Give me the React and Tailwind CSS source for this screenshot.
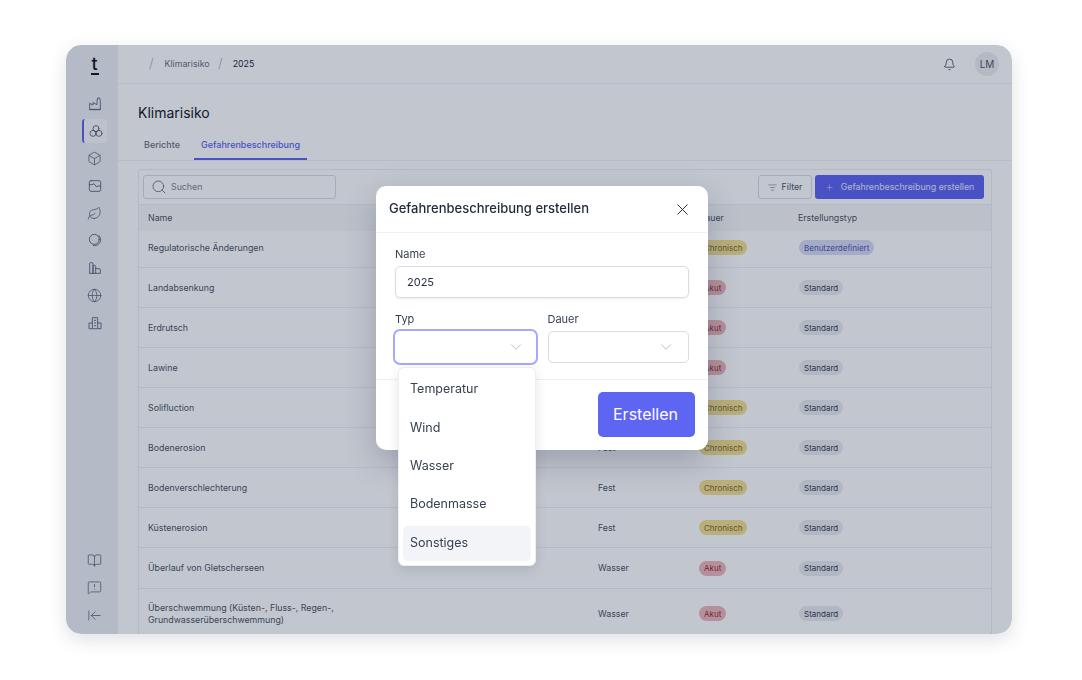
import React from 'react';
import {
  ArrowLeftToLine,
  Bell,
  BookOpen,
  Box,
  ChevronDown,
  Globe,
  Leaf,
  ListFilter,
  MessageSquareWarning,
  Plus,
  Search,
  X,
} from 'lucide-react';

const IconSvg = ({ children }) => (
  <svg width="16" height="16" viewBox="0 0 24 24" fill="none" stroke="currentColor" strokeWidth="1.3" strokeLinejoin="round" strokeLinecap="round">
    {children}
  </svg>
);

const FactoryIcon = () => (
  <IconSvg>
    <path d="M4 20v-9l5 2.500V10l6 3V8l1-5h3l1 5v12z" />
    <path d="M4 20h16" />
  </IconSvg>
);

const CirclesIcon = () => (
  <IconSvg>
    <circle cx="12" cy="8.5" r="4.5" />
    <circle cx="7.5" cy="15.5" r="4.5" />
    <circle cx="16.5" cy="15.5" r="4.5" />
  </IconSvg>
);

const ChartBoxIcon = () => (
  <IconSvg>
    <rect x="3.5" y="4" width="17" height="16" rx="2.5" />
    <path d="M3.5 10h4l3-1.500 4 5 2-1.500h4" />
  </IconSvg>
);

const OrbitIcon = () => (
  <IconSvg>
    <circle cx="11" cy="11" r="7.5" />
    <path d="M18 5.500c2.500 2.500 3.200 6.500 1.500 10-1.700 3.500-5.500 5.500-10 5" />
  </IconSvg>
);

const BarsIcon = () => (
  <IconSvg>
    <path d="M4 20V5.500A1.500 1.500 0 0 1 5.500 4h2A1.500 1.500 0 0 1 9 5.500V20" />
    <path d="M9 20V9.500A1.500 1.500 0 0 1 10.500 8h1A1.500 1.500 0 0 1 13 9.500V20" />
    <path d="M13 13h5.500a1.500 1.500 0 0 1 1.500 1.500V20H4" />
  </IconSvg>
);

const BuildingIcon = () => (
  <IconSvg>
    <path d="M3 20v-8h5V4h8v8h5v8z" />
    <path d="M11 8h2M11 12h2M11 16h2M8 20v-8M16 20v-8" />
  </IconSvg>
);

const navTop = [
  { key: 'factory', icon: <FactoryIcon /> },
  { key: 'circles', icon: <CirclesIcon />, active: true },
  { key: 'box', icon: <Box size={15} strokeWidth={1.2} /> },
  { key: 'chart', icon: <ChartBoxIcon /> },
  { key: 'leaf', icon: <Leaf size={15} strokeWidth={1.2} /> },
  { key: 'orbit', icon: <OrbitIcon /> },
  { key: 'bars', icon: <BarsIcon /> },
  { key: 'globe', icon: <Globe size={15} strokeWidth={1.2} /> },
  { key: 'building', icon: <BuildingIcon /> },
];

const navBottom = [
  { key: 'book', icon: <BookOpen size={15} strokeWidth={1.2} /> },
  { key: 'message', icon: <MessageSquareWarning size={15} strokeWidth={1.2} /> },
  { key: 'collapse', icon: <ArrowLeftToLine size={15} strokeWidth={1.2} /> },
];

// typ is left out where the dialog hides the cell
const rows = [
  { name: 'Regulatorische Änderungen', dauer: 'Chronisch', art: 'Benutzerdefiniert', h: 'h-[37px] pb-[3px]' },
  { name: 'Landabsenkung', dauer: 'Akut', art: 'Standard', h: 'h-[40px]' },
  { name: 'Erdrutsch', dauer: 'Akut', art: 'Standard', h: 'h-[40px]' },
  { name: 'Lawine', dauer: 'Akut', art: 'Standard', h: 'h-[40px]' },
  { name: 'Solifluction', dauer: 'Chronisch', art: 'Standard', h: 'h-[40px]' },
  { name: 'Bodenerosion', typ: 'Fest', dauer: 'Chronisch', art: 'Standard', h: 'h-[40px]' },
  { name: 'Bodenverschlechterung', typ: 'Fest', dauer: 'Chronisch', art: 'Standard', h: 'h-[40px]' },
  { name: 'Küstenerosion', typ: 'Fest', dauer: 'Chronisch', art: 'Standard', h: 'h-[40px]' },
  { name: 'Überlauf von Gletscherseen', typ: 'Wasser', dauer: 'Akut', art: 'Standard', h: 'h-[41px]' },
  { name: 'Überschwemmung (Küsten-, Fluss-, Regen-, Grundwasserüberschwemmung)', typ: 'Wasser', dauer: 'Akut', art: 'Standard', h: 'h-[50px]' },
];

const badgeColors = {
  Chronisch: 'bg-[#f4df8f] text-[#7d6c28]',
  Akut: 'bg-[#eeb6ba] text-[#8f2c3c]',
  Benutzerdefiniert: 'bg-[#d8dbf6] text-[#4f55b0]',
  Standard: 'bg-[#e9ebf0] text-[#374151]',
};

const Badge = ({ label }) => (
  <span className={`inline-flex h-[15px] items-center rounded-full px-[5px] text-[8px] ${badgeColors[label]}`}>
    {label}
  </span>
);

const options = ['Temperatur', 'Wind', 'Wasser', 'Bodenmasse', 'Sonstiges'];

const App = () => {
  return (
    <div className="h-[680px] w-[1082px] overflow-hidden bg-white pl-[66px] pt-[45px] font-['Inter',sans-serif]">
      <div className="relative flex h-[589px] w-[946px] overflow-hidden rounded-[15px] bg-white shadow-[0_6px_18px_rgba(30,40,70,0.14)]">
        {/* sidebar */}
        <aside className="flex w-[52px] shrink-0 flex-col items-center bg-[#ecEFf4] pb-[7px] pl-[5px] text-[#556074]">
          <div className="mt-[8px] flex h-[26px] w-[12px] flex-col items-center text-[#111827]">
            <span className="text-[18px] font-medium leading-[21px]">t</span>
            <span className="mt-[-1px] h-[1.5px] w-[8px] bg-[#111827]" />
          </div>
          <nav className="mt-[12.5px] flex flex-col gap-[3.4px]">
            {navTop.map((item) => (
              <div
                key={item.key}
                className={`flex h-[24px] w-[25px] items-center justify-center rounded-[3px] ${
                  item.active ? 'border-l-[2px] border-[#5d65f2] bg-[#f8f9fb]' : ''
                }`}
              >
                {item.icon}
              </div>
            ))}
          </nav>
          <div className="mt-auto flex flex-col gap-[3.5px]">
            {navBottom.map((item) => (
              <div key={item.key} className="flex h-[24px] w-[25px] items-center justify-center">
                {item.icon}
              </div>
            ))}
          </div>
        </aside>

        <main className="flex min-w-0 flex-1 flex-col">
          {/* top bar */}
          <header className="flex h-[39px] shrink-0 items-center border-b border-[#f0f1f4] pl-[31px] pr-[13px] text-[8.8px]">
            <span className="text-[13px] font-light text-[#aeb4bf]">/</span>
            <span className="ml-[11px] text-[#6b7280]">Klimarisiko</span>
            <span className="ml-[8.500px] text-[13px] font-light text-[#aeb4bf]">/</span>
            <span className="ml-[10px] text-[#1f2937]">2025</span>
            <div className="ml-auto flex items-center gap-[19px]">
              <Bell size={13} strokeWidth={1.3} className="text-[#1f2937]" />
              <div className="flex h-[24px] w-[24px] items-center justify-center rounded-full bg-[#eceef2] text-[10px] text-[#4b5563]">
                LM
              </div>
            </div>
          </header>

          {/* page head */}
          <div className="shrink-0 border-b border-[#f0f1f4] px-[20px]">
            <h1 className="pt-[19px] text-[14px] font-normal leading-[20px] text-[#111827]">Klimarisiko</h1>
            <div className="mt-[10px] flex text-[9px] font-medium">
              <div className="flex h-[27px] w-[56px] items-start pl-[6px] pt-[5px] text-[#6b7280]">Berichte</div>
              <div className="flex h-[27px] w-[113px] items-start justify-center border-b-2 border-[#5d65f2] pt-[5px] text-[#5d65f2]">
                Gefahrenbeschreibung
              </div>
            </div>
          </div>

          {/* table card */}
          <div className="mx-[20px] mt-[8px] min-h-0 flex-1 overflow-hidden rounded-t-[3px] border-x border-t border-[#eceef2]">
            <div className="flex h-[35px] items-center justify-between border-b border-[#eceef2] pl-[4px] pr-[7px]">
              <div className="flex h-[24px] w-[193px] items-center gap-[4px] rounded-[3px] border border-[#d9dce2] pl-[7px] text-[8.8px] text-[#7d8492]">
                <Search size={16} strokeWidth={1.1} className="text-[#4b5563]" />
                <span>Suchen</span>
              </div>
              <div className="flex items-center gap-[3px]">
                <div className="flex h-[24px] w-[54px] items-center justify-center gap-[5px] rounded-[3px] border border-[#d9dce2] text-[8.8px] text-[#4b5563]">
                  <ListFilter size={9} strokeWidth={1.2} />
                  <span>Filter</span>
                </div>
                <div className="flex h-[24px] w-[169px] items-center justify-center gap-[7px] rounded-[3px] bg-[#5d65f2] text-[8.8px] text-[#e5e7fd]">
                  <Plus size={9} strokeWidth={1.3} />
                  <span>Gefahrenbeschreibung erstellen</span>
                </div>
              </div>
            </div>

            <div className="grid h-[26px] grid-cols-[450px_101px_99px_1fr] items-center bg-[#f7f8f9] pl-[9px] text-[8.8px] text-[#4b5563]">
              <div>Name</div>
              <div>Typ</div>
              <div>Dauer</div>
              <div>Erstellungstyp</div>
            </div>

            {rows.map((row) => (
              <div
                key={row.name}
                className={`grid grid-cols-[450px_101px_99px_1fr] items-center border-b border-[#eceef2] pl-[9px] text-[8.8px] text-[#4b5563] ${row.h}`}
              >
                <div className="w-[200px] leading-[12px]">{row.name}</div>
                <div>{row.typ}</div>
                <div><Badge label={row.dauer} /></div>
                <div className="pl-px"><Badge label={row.art} /></div>
              </div>
            ))}
          </div>
        </main>

        {/* overlay */}
        <div className="absolute inset-0 bg-[#0c1c3d]/25 backdrop-blur-[0.6px]" />

        {/* modal */}
        <div className="absolute left-[310px] top-[141px] w-[332px] rounded-[10px] bg-white shadow-[0_12px_32px_rgba(30,40,70,0.24)]">
          <div className="flex h-[47px] items-center justify-between border-b border-[#f0f1f4] pl-[13px] pr-[16.500px]">
            <h2 className="text-[13px] font-medium text-[#1f2937]">Gefahrenbeschreibung erstellen</h2>
            <X size={19} strokeWidth={1.2} className="text-[#1f2937]" />
          </div>
          <div className="border-b border-[#f0f1f4] px-[19px] pb-[16px] pt-[14px] text-[11px] text-[#374151]">
            <label className="block leading-[14px]">Name</label>
            <div className="mt-[5px] flex h-[32px] w-[294px] items-center rounded-[5px] border border-[#d9dce2] pl-[11px] text-[#1f2937] shadow-[0_1px_2px_rgba(30,40,70,0.08)]">
              2025
            </div>
            <div className="mt-[14px] flex gap-[12px]">
              <div className="w-[141px]">
                <label className="block leading-[14px]">Typ</label>
                <div className="relative mt-[5px] flex h-[32px] items-center justify-end rounded-[5px] pr-[10.500px] outline-2 outline-[#a5a8ff]">
                  <ChevronDown size={18} strokeWidth={1} className="text-[#a3a9b5]" />
                  {/* open dropdown */}
                  <ul className="absolute left-[3px] top-[36px] z-10 h-[199px] w-[138px] rounded-[6px] border border-[#eceef2] bg-white px-[4px] pt-[4px] text-[12.500px] text-[#374151] shadow-[0_4px_12px_rgba(30,40,70,0.12)]">
                    {options.map((opt) => (
                      <li
                        key={opt}
                        className={`flex h-[35px] items-center rounded-[5px] pl-[7px] [&:not(:first-child)]:mt-[3.400px] ${
                          opt === 'Sonstiges' ? 'bg-[#f3f4f7]' : ''
                        }`}
                      >
                        {opt}
                      </li>
                    ))}
                  </ul>
                </div>
              </div>
              <div className="w-[142px]">
                <label className="block leading-[14px]">Dauer</label>
                <div className="mt-[5px] flex h-[32px] items-center justify-end rounded-[5px] border border-[#d9dce2] pr-[13.500px]">
                  <ChevronDown size={18} strokeWidth={1} className="text-[#a3a9b5]" />
                </div>
              </div>
            </div>
          </div>
          <div className="flex h-[70px] items-start justify-end pr-[13px] pt-[12px]">
            <button className="h-[45px] w-[97px] rounded-[5px] bg-[#5d65f2] pb-[2px] pr-[2px] text-[16px] text-white">Erstellen</button>
          </div>
        </div>
      </div>
    </div>
  );
};

export default App;
